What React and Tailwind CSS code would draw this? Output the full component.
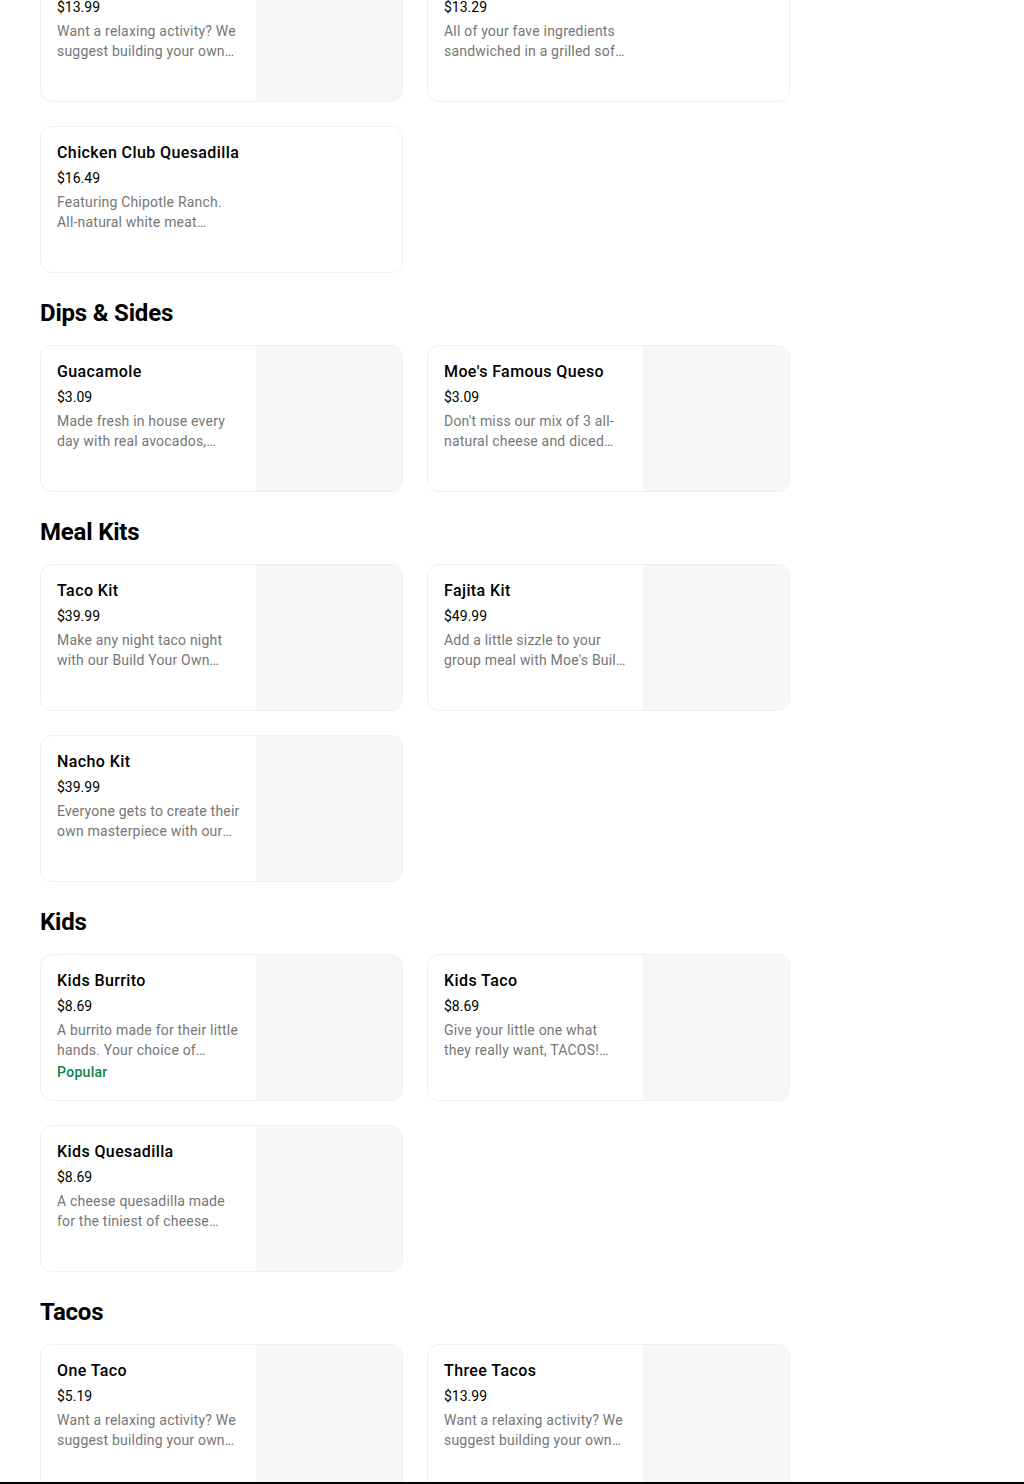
import React from 'react';

const sections = [
  {
    title: null,
    items: [
      { name: 'Quesadilla', price: '$13.99', desc: 'Want a relaxing activity? We suggest building your own quesadilla with all your favorites.' },
      { name: 'Chicken Quesadilla', price: '$13.29', desc: 'All of your fave ingredients sandwiched in a grilled soft flour tortilla.', blank: true },
      { name: 'Chicken Club Quesadilla', price: '$16.49', desc: 'Featuring Chipotle Ranch. All-natural white meat chicken, bacon and cheese.', blank: true },
    ],
  },
  {
    title: 'Dips & Sides',
    items: [
      { name: 'Guacamole', price: '$3.09', desc: 'Made fresh in house every day with real avocados, jalapeños and cilantro.' },
      { name: "Moe's Famous Queso", price: '$3.09', desc: "Don't miss our mix of 3 all-natural cheese and diced peppers." },
    ],
  },
  {
    title: 'Meal Kits',
    items: [
      { name: 'Taco Kit', price: '$39.99', desc: 'Make any night taco night with our Build Your Own Taco Kit for the whole family.' },
      { name: 'Fajita Kit', price: '$49.99', desc: "Add a little sizzle to your group meal with Moe's Build Your Own Fajita Kit." },
      { name: 'Nacho Kit', price: '$39.99', desc: 'Everyone gets to create their own masterpiece with our Nacho Kit.' },
    ],
  },
  {
    title: 'Kids',
    items: [
      { name: 'Kids Burrito', price: '$8.69', desc: 'A burrito made for their little hands. Your choice of protein and cheese.', popular: true },
      { name: 'Kids Taco', price: '$8.69', desc: 'Give your little one what they really want, TACOS! Choice of protein.' },
      { name: 'Kids Quesadilla', price: '$8.69', desc: 'A cheese quesadilla made for the tiniest of cheese lovers.' },
    ],
  },
  {
    title: 'Tacos',
    items: [
      { name: 'One Taco', price: '$5.19', desc: 'Want a relaxing activity? We suggest building your own taco.' },
      { name: 'Three Tacos', price: '$13.99', desc: 'Want a relaxing activity? We suggest building your own tacos.' },
    ],
  },
];

function ItemCard({ item }) {
  return (
    <div className="flex h-[147px] overflow-hidden rounded-xl border border-[#efefef] bg-white">
      <div className="flex-1 min-w-0 pl-4 pr-4 pt-[16px]">
        <div className="text-base leading-5 font-medium tracking-[0.4px] text-black whitespace-nowrap">{item.name}</div>
        <div className="mt-[5px] text-sm leading-5 text-black">{item.price}</div>
        <div className="mt-[4px] text-sm leading-5 tracking-[0.2px] text-[#767676] line-clamp-2">{item.desc}</div>
        {item.popular && (
          <div className="mt-[2px] text-sm leading-5 font-medium tracking-[0.3px] text-[#0e8345]">Popular</div>
        )}
      </div>
      <div className={`w-[146px] shrink-0 ${item.blank ? 'bg-white' : 'bg-[#f7f7f7]'}`} />
    </div>
  );
}

export default function App() {
  return (
    <div className="min-h-screen bg-white overflow-hidden" style={{ fontFamily: 'Roboto, "Noto Sans", sans-serif' }}>
      <div className="w-[750px] ml-10 -mt-[45px] pb-10">
        {sections.map((section, i) => (
          <div key={i}>
            {section.title && (
              <h2 className="pt-6 mb-4 h-[56px] text-2xl leading-8 font-bold tracking-[-0.2px] text-black">
                {section.title}
              </h2>
            )}
            <div className="grid grid-cols-2 gap-6">
              {section.items.map((item) => (
                <ItemCard key={item.name} item={item} />
              ))}
            </div>
          </div>
        ))}
      </div>
      <div className="fixed bottom-0 left-0 right-0 h-[2px] bg-black" />
    </div>
  );
}
